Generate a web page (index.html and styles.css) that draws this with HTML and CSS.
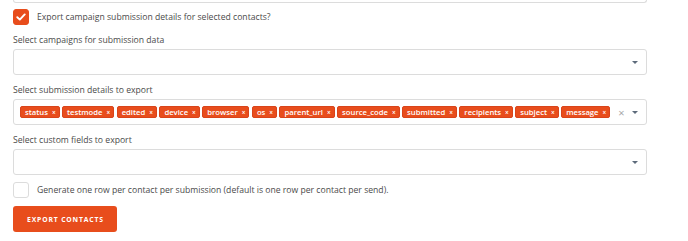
FILE: index.html
```html
<!DOCTYPE html>
<html lang="en">
<head>
    <meta charset="UTF-8">
    <title>Export contacts</title>
    <link rel="stylesheet" href="styles.css">
</head>
<body>
    <div class="export-form">
        <div class="campo-anterior"></div>

        <label class="check-row">
            <span class="check check-on">
                <svg width="10" height="8" viewBox="0 0 10 8"><path d="M1.3 4.2 L3.8 6.6 L8.7 1.4" fill="none" stroke="#fff" stroke-width="1.9" stroke-linecap="round" stroke-linejoin="round"/></svg>
            </span>
            <span>Export campaign submission details for selected contacts?</span>
        </label>

        <div class="field-label">Select campaigns for submission data</div>
        <div class="select-box">
            <span class="select-value"></span>
            <span class="arrow"></span>
        </div>

        <div class="field-label">Select submission details to export</div>
        <div class="select-box">
            <div class="tags">
                <span class="tag">status<i>×</i></span>
                <span class="tag">testmode<i>×</i></span>
                <span class="tag">edited<i>×</i></span>
                <span class="tag">device<i>×</i></span>
                <span class="tag">browser<i>×</i></span>
                <span class="tag">os<i>×</i></span>
                <span class="tag">parent_url<i>×</i></span>
                <span class="tag">source_code<i>×</i></span>
                <span class="tag">submitted<i>×</i></span>
                <span class="tag">recipients<i>×</i></span>
                <span class="tag">subject<i>×</i></span>
                <span class="tag">message<i>×</i></span>
            </div>
            <span class="clear">×</span>
            <span class="arrow"></span>
        </div>

        <div class="field-label">Select custom fields to export</div>
        <div class="select-box">
            <span class="select-value"></span>
            <span class="arrow"></span>
        </div>

        <label class="check-row check-row-2">
            <span class="check"></span>
            <span>Generate one row per contact per submission (default is one row per contact per send).</span>
        </label>

        <button class="btn-export">Export contacts</button>
    </div>
</body>
</html>
```

FILE: styles.css
```css
:root {
    --naranja: #e84d1c;
    --borde: #dcdcdc;
    --texto: #4a4a4a;
}

body {
    margin: 0;
    font-family: 'Open Sans', sans-serif;
    font-size: 8.65px;
    color: var(--texto);
    background: #fff;
}

.export-form {
    display: flex;
    flex-direction: column;
    align-items: flex-start;
    width: 634px;
    padding-left: 13px;
}

/* borde inferior del campo de arriba (cortado) */
.campo-anterior {
    align-self: stretch;
    height: 2px;
    border: 1px solid var(--borde);
    border-top: none;
    border-radius: 0 0 3px 3px;
}

.check-row {
    display: flex;
    align-items: center;
    gap: 8px;
    margin-top: 6px;
    line-height: 16px;
}

.check {
    width: 16px;
    height: 16px;
    box-sizing: border-box;
    border: 1px solid var(--borde);
    border-radius: 3px;
    display: flex;
    justify-content: center;
    align-items: center;
    background: #fff;
}

.check-on {
    background: var(--naranja);
    border-color: var(--naranja);
}

.field-label {
    margin-top: 9px;
    margin-bottom: 3px;
    line-height: 12px;
}

.select-box {
    align-self: stretch;
    height: 26px;
    box-sizing: border-box;
    border: 1px solid var(--borde);
    border-radius: 3px;
    display: flex;
    align-items: center;
    padding: 0 8px 0 6px;
}

.select-value {
    flex: 1;
}

.arrow {
    width: 0;
    height: 0;
    border-left: 3px solid transparent;
    border-right: 3px solid transparent;
    border-top: 3px solid #5d6b7b;
    margin-left: auto;
}

.tags {
    display: flex;
    gap: 2.4px;
}

.tag {
    height: 12px;
    line-height: 11px;
    box-sizing: border-box;
    padding: 0 3px 0 4px;
    background: var(--naranja);
    border: 1px solid #d9441a;
    border-radius: 2px;
    color: #fff;
    font-size: 7.7px;
    font-weight: 600;
    white-space: nowrap;
}

.tag i {
    font-style: normal;
    font-size: 6.5px;
    margin-left: 4px;
}

.clear {
    color: #a8a8a8;
    font-size: 11px;
    margin-left: 8px;
}

.check-row-2 {
    margin-top: 7px;
}

.btn-export {
    margin-top: 8px;
    height: 26px;
    padding: 0 13px 0 14px;
    background: var(--naranja);
    border: none;
    border-radius: 3px;
    color: #fff;
    font-family: 'Open Sans', sans-serif;
    font-size: 6.8px;
    font-weight: 700;
    letter-spacing: 0.85px;
    text-transform: uppercase;
}
```
